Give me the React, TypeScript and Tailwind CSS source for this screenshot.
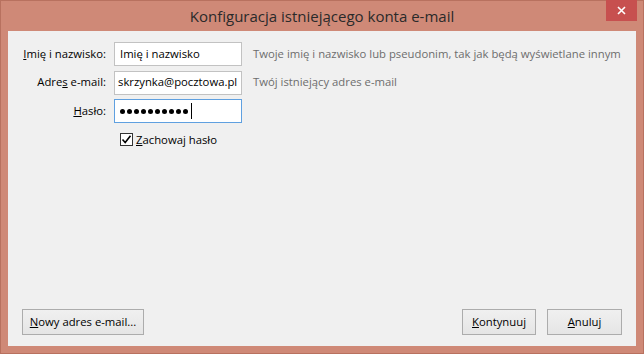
import React from 'react'

const font = { fontFamily: '"Open Sans", "Noto Sans", sans-serif' }

function Btn({ children, className = '' }: { children: React.ReactNode; className?: string }) {
  return (
    <button
      className={`h-[26px] border border-[#acacac] bg-gradient-to-b from-[#f0f0f0] to-[#e5e5e5] text-[11.3px] text-black ${className}`}
    >
      {children}
    </button>
  )
}

export default function App() {
  return (
    <div
      className="w-[644px] h-[354px] bg-[#cf8977] border border-[#b8715f] flex flex-col px-[7px] pb-[7px]"
      style={font}
    >
      {/* title bar */}
      <div className="relative h-[30px] flex items-center justify-center">
        <span className="text-[15px] text-[#2a2a2a] pt-[1px]">Konfiguracja istniejącego konta e-mail</span>
        <div className="absolute right-[-1px] top-[-1px] w-[31px] h-[21px] bg-[#c7504f] flex items-center justify-center">
          <svg width="9" height="9" viewBox="0 0 9 9">
            <path d="M1 1L8 8M8 1L1 8" stroke="#fff" strokeWidth="1.6" />
          </svg>
        </div>
      </div>

      {/* client */}
      <div className="flex-1 bg-[#f0f0f0] flex flex-col pt-[11px] px-[14px] pb-[11px]">
        <div className="grid grid-cols-[84px_128px_1fr] gap-x-[8px] gap-y-[4.5px] items-center text-[11.3px]">
          <label className="text-right text-black whitespace-nowrap">
            <u>I</u>mię i nazwisko:
          </label>
          <div className="h-[24px] border border-[#c2c2c2] bg-white flex items-center px-[5px] whitespace-nowrap overflow-hidden">
            Imię i nazwisko
          </div>
          <span className="pl-[3px] text-[#6d6d6d] whitespace-nowrap">
            Twoje imię i nazwisko lub pseudonim, tak jak będą wyświetlane innym
          </span>

          <label className="text-right text-black whitespace-nowrap">
            Adre<u>s</u> e-mail:
          </label>
          <div className="h-[24px] border border-[#c2c2c2] bg-white flex items-center px-[3px] whitespace-nowrap overflow-hidden">
            skrzynka@pocztowa.pl
          </div>
          <span className="pl-[3px] text-[#6d6d6d] whitespace-nowrap">Twój istniejący adres e-mail</span>

          <label className="text-right text-black whitespace-nowrap">
            <u>H</u>asło:
          </label>
          <div className="h-[24px] border border-[#5fa0e0] bg-white flex items-center pl-[5px] gap-[2px]">
            {Array.from({ length: 10 }).map((_, i) => (
              <span key={i} className="w-[5px] h-[5px] rounded-full bg-black" />
            ))}
            <span className="ml-[1px] w-[1px] h-[16px] bg-black" />
          </div>
          <span />

          <span />
          <div className="flex items-center gap-[3px] pl-[6px] pt-[4px] whitespace-nowrap">
            <span className="w-[13px] h-[13px] border border-[#333] bg-white flex items-center justify-center">
              <svg width="11" height="11" viewBox="0 0 11 11">
                <path d="M1.5 5.5L4.2 8.5L9.5 1.8" stroke="#000" strokeWidth="1.6" fill="none" />
              </svg>
            </span>
            <span className="text-black">
              <u>Z</u>achowaj hasło
            </span>
          </div>
          <span />
        </div>

        <div className="flex-1" />

        <div className="flex items-center">
          <Btn className="w-[122px]">
            <u>N</u>owy adres e-mail...
          </Btn>
          <div className="flex-1" />
          <Btn className="w-[74px]">
            <u>K</u>ontynuuj
          </Btn>
          <Btn className="w-[75px] ml-[11px]">
            <u>A</u>nuluj
          </Btn>
        </div>
      </div>
    </div>
  )
}
